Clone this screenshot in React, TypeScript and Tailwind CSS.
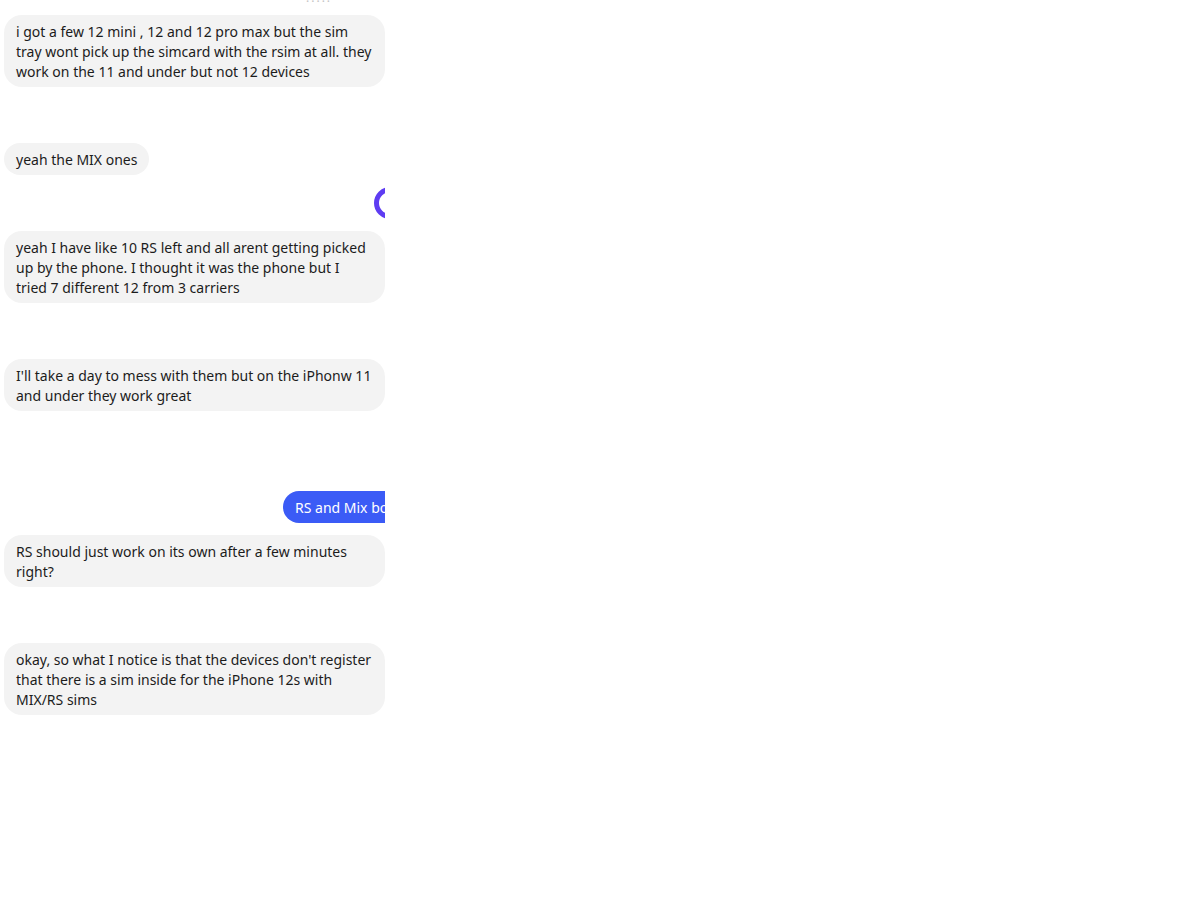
import React from 'react';

const Bubble: React.FC<{ lines: string[]; className?: string }> = ({ lines, className }) => (
  <div className={`ml-1 w-[381px] shrink-0 rounded-[18px] bg-[#f3f3f3] px-3 pt-[7px] pb-[5px] text-[14px] leading-5 text-[#1c1c1c] ${className ?? ''}`}>
    {lines.map((l, i) => (
      <div key={i} className="whitespace-nowrap">{l}</div>
    ))}
  </div>
);

const App: React.FC = () => {
  return (
    <div className="w-[1196px] h-[914px] bg-white" style={{ fontFamily: '"Noto Sans", "Open Sans", sans-serif' }}>
      <div className="relative w-[385px] h-full overflow-hidden flex flex-col">
        {/* clipped timestamp at the top */}
        <div className="absolute -top-[11px] left-[306px] text-[12px] tracking-[2px] text-[#c4c4c4]">.....</div>

        <Bubble
          className="mt-[15px]"
          lines={[
            'i got a few 12 mini , 12 and 12 pro max but the sim',
            'tray wont pick up the simcard with the rsim at all. they',
            'work on the 11 and under but not 12 devices',
          ]}
        />

        <div className="mt-[56px] ml-1 self-start rounded-[18px] bg-[#f3f3f3] px-3 pt-[7px] pb-[5px] text-[14px] leading-5 text-[#1c1c1c] whitespace-nowrap">
          yeah the MIX ones
        </div>

        <div className="mt-[12px] ml-[374px] w-[32px] h-[32px] shrink-0 rounded-full border-[5px] border-[#5e3cf2]" />

        <Bubble
          className="mt-[12px]"
          lines={[
            'yeah I have like 10 RS left and all arent getting picked',
            'up by the phone. I thought it was the phone but I',
            'tried 7 different 12 from 3 carriers',
          ]}
        />

        <Bubble
          className="mt-[56px]"
          lines={['I\'ll take a day to mess with them but on the iPhonw 11', 'and under they work great']}
        />

        <div className="mt-[80px] ml-[283px] self-start shrink-0 rounded-[18px] bg-[#3b5bf6] px-3 pt-[7px] pb-[5px] text-[14px] leading-5 text-white whitespace-nowrap">
          RS and Mix both
        </div>

        <Bubble
          className="mt-[12px]"
          lines={['RS should just work on its own after a few minutes', 'right?']}
        />

        <Bubble
          className="mt-[56px]"
          lines={[
            'okay, so what I notice is that the devices don\'t register',
            'that there is a sim inside for the iPhone 12s with',
            'MIX/RS sims',
          ]}
        />
      </div>
    </div>
  );
};

export default App;
